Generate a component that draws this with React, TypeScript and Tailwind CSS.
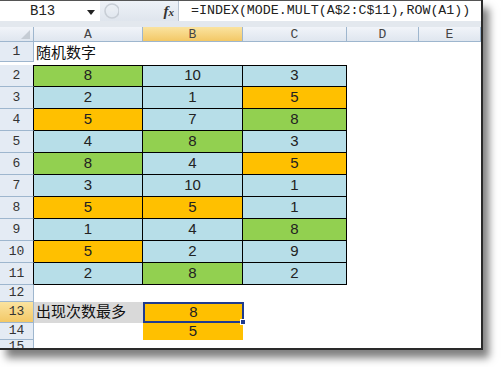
import React from "react";

const G = "bg-[#92d050]";
const Y = "bg-[#ffc000]";
const L = "bg-[#b7dee8]";

// A2:C11 — [fill, value]
const table: [string, number][][] = [
  [[G, 8], [L, 10], [L, 3]],
  [[L, 2], [L, 1], [Y, 5]],
  [[Y, 5], [L, 7], [G, 8]],
  [[L, 4], [G, 8], [L, 3]],
  [[G, 8], [L, 4], [Y, 5]],
  [[L, 3], [L, 10], [L, 1]],
  [[Y, 5], [Y, 5], [L, 1]],
  [[L, 1], [L, 4], [G, 8]],
  [[Y, 5], [L, 2], [L, 9]],
  [[L, 2], [G, 8], [L, 2]],
];

const widths = ["w-[109px]", "w-[100px]", "w-[104px]"];
const mono = "font-['Liberation_Mono',monospace]";
const cjk = "font-['Liberation_Sans','Noto_Sans_CJK_SC',sans-serif]";

function RowHead({ n, h, dark, active }: { n: number; h: string; dark?: boolean; active?: boolean }) {
  return (
    <div
      className={`${h} w-[34px] shrink-0 flex items-center justify-center border-b border-r border-b-[#9eb6ce] ${
        dark ? "border-r-black" : "border-r-[#9eb6ce]"
      } ${active ? "bg-gradient-to-b from-[#fae39f] to-[#f3c865]" : "bg-[#e4ebf4]"} ${mono} text-[13px] text-[#333] leading-none`}
    >
      {n}
    </div>
  );
}

export default function App() {
  return (
    <div className="min-h-screen bg-white">
      <div className="w-[483px] border-r-2 border-b-2 border-[#2a2a2a] shadow-[6px_8px_8px_rgba(0,0,0,0.5)] bg-white">
        {/* formula bar */}
        <div className="flex h-[21px] border-t border-[#555]">
          <div className="w-[100px] bg-white flex items-center relative">
            <span className={`${mono} text-[14px] text-[#222] pl-[30px]`}>B13</span>
            <svg className="absolute left-[87px] top-[9px]" width="8" height="5" viewBox="0 0 8 5">
              <path d="M0 0h8L4 5z" fill="#222" />
            </svg>
          </div>
          <div className="w-[79px] flex items-center bg-gradient-to-b from-[#eef2f7] to-[#dfe5ed] border-r border-[#b8c4d2]">
            <svg className="ml-[3px]" width="16" height="18" viewBox="0 0 16 18">
              <circle cx="9" cy="9" r="7" fill="none" stroke="#c8ced6" strokeWidth="1.6" />
              <circle cx="9" cy="7" r="2.5" fill="#e9edf2" />
            </svg>
            <span className="ml-auto mr-[4px] font-['Liberation_Serif',serif] italic font-bold text-[15px] text-[#333] leading-none">
              f<span className="text-[11px]">x</span>
            </span>
          </div>
          <div className={`flex-1 bg-white flex items-center pl-[12px] ${mono} text-[13.3px] text-[#222] whitespace-nowrap`}>
            =INDEX(MODE.MULT(A$2:C$11),ROW(A1))
          </div>
        </div>
        <div className="h-[6px] bg-[#e3e8ee]" />

        {/* column headers */}
        <div className={`flex h-[15px] ${mono} text-[13px] text-[#444] leading-none`}>
          <div className="w-[34px] border-r border-b border-[#9eb6ce] bg-gradient-to-b from-[#f1f4f9] to-[#dfe6ef] relative">
            <svg className="absolute right-[3px] bottom-[2px]" width="9" height="9" viewBox="0 0 9 9">
              <path d="M9 0v9H0z" fill="#c5ccd4" />
            </svg>
          </div>
          {[
            ["A", "w-[109px]", false],
            ["B", "w-[100px]", true],
            ["C", "w-[104px]", false],
            ["D", "w-[72px]", false],
            ["E", "w-[62px]", false],
          ].map(([l, w, on]) => (
            <div
              key={l as string}
              className={`${w} flex items-center justify-center border-r border-b border-[#9eb6ce] ${
                on ? "bg-gradient-to-b from-[#fae39f] to-[#f3c865]" : "bg-gradient-to-b from-[#f1f4f9] to-[#dfe6ef]"
              }`}
            >
              {l}
            </div>
          ))}
        </div>

        {/* row 1 */}
        <div className="flex">
          <RowHead n={1} h="h-[20px]" />
          <div className={`flex-1 flex items-center pl-[2px] ${cjk} text-[15px] text-[#111]`}>随机数字</div>
        </div>

        {/* rows 2-11 */}
        {table.map((row, r) => (
          <div key={r} className="flex">
            <RowHead n={r + 2} h="h-[22px]" dark />
            {row.map(([bg, v], c) => (
              <div
                key={c}
                className={`${widths[c]} h-[22px] ${bg} border-r border-b border-black ${
                  r === 0 ? "border-t" : ""
                } flex items-center justify-center font-['Liberation_Sans',sans-serif] text-[15px] text-[#222]`}
              >
                {v}
              </div>
            ))}
          </div>
        ))}

        {/* row 12 */}
        <div className="flex">
          <RowHead n={12} h="h-[17px]" />
        </div>

        {/* row 13 */}
        <div className="flex">
          <RowHead n={13} h="h-[21px]" active />
          <div className={`w-[109px] h-[21px] bg-[#d9d9d9] flex items-center pl-[2px] ${cjk} text-[15px] text-[#111]`}>
            出现次数最多
          </div>
          <div className="w-[101px] h-[21px] bg-[#ffc000] border-2 border-[#1f3b8f] flex items-center justify-center font-['Liberation_Sans',sans-serif] text-[15px] text-[#222] relative">
            8
            <div className="absolute -right-[4px] -bottom-[4px] w-[6px] h-[6px] bg-[#1f3b8f] border border-white" />
          </div>
        </div>

        {/* row 14 */}
        <div className="flex">
          <RowHead n={14} h="h-[17px]" />
          <div className="w-[109px]" />
          <div className="w-[100px] h-[17px] bg-[#ffc000] flex items-center justify-center font-['Liberation_Sans',sans-serif] text-[15px] text-[#222]">
            5
          </div>
        </div>

        {/* row 15, cut off by the window edge */}
        <div className="flex h-[8px] overflow-hidden">
          <div className={`w-[34px] h-[8px] border-r border-[#9eb6ce] bg-[#e4ebf4] flex justify-center ${mono} text-[13px] text-[#333] leading-[14px]`}>
            15
          </div>
        </div>
      </div>
    </div>
  );
}
